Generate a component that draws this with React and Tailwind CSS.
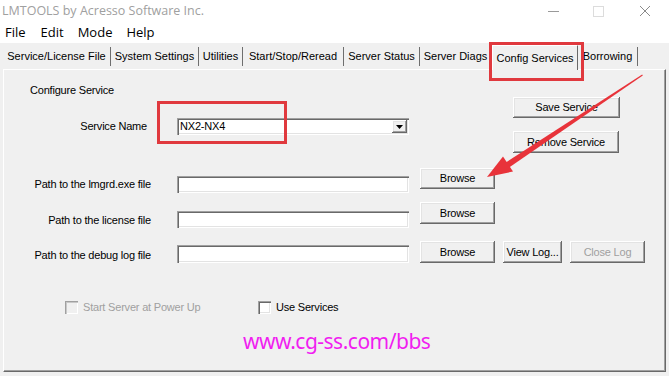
import React from 'react';

const raised =
  'bg-[#f0f0f0] shadow-[inset_-1px_-1px_0_#696969,inset_1px_1px_0_#ffffff,inset_-2px_-2px_0_#a0a0a0,inset_2px_2px_0_#e3e3e3]';
const sunken =
  'bg-white shadow-[inset_1px_1px_0_#a0a0a0,inset_2px_2px_0_#696969,inset_-1px_-1px_0_#ffffff,inset_-2px_-2px_0_#e3e3e3]';

const tabs = [
  { label: 'Service/License File', w: 'w-[108px]' },
  { label: 'System Settings', w: 'w-[88px]' },
  { label: 'Utilities', w: 'w-[44px]' },
  { label: 'Start/Stop/Reread', w: 'w-[101px]' },
  { label: 'Server Status', w: 'w-[76px]' },
  { label: 'Server Diags', w: 'w-[72px]' },
  { label: 'Config Services', w: 'w-[86px]', active: true },
  { label: 'Borrowing', w: 'w-[60px]' },
];

const Btn = ({ children, className = '', disabled }) => (
  <div
    className={`${raised} flex items-center justify-center shrink-0 ${
      disabled ? 'text-[#a0a0a0]' : 'text-black'
    } ${className}`}
  >
    {children}
  </div>
);

const Check = ({ label, disabled, className = '' }) => (
  <div className={`flex items-center ${className}`}>
    <div
      className={`w-[13px] h-[13px] shrink-0 ${
        disabled
          ? 'bg-[#f0f0f0] shadow-[inset_1px_1px_0_#a0a0a0,inset_2px_2px_0_#c8c8c8,inset_-1px_-1px_0_#ffffff]'
          : sunken
      }`}
    />
    <span className={`ml-[5px] ${disabled ? 'text-[#a0a0a0]' : 'text-black'}`}>{label}</span>
  </div>
);

export default function App() {
  return (
    <div
      className="relative w-[669px] h-[376px] overflow-hidden bg-[#f0f0f0] flex flex-col"
      style={{ fontFamily: '"Liberation Sans", Arial, sans-serif' }}
    >
      {/* Title bar */}
      <div className="h-[22px] bg-white flex items-center justify-between shrink-0">
        <span
          className="pl-[2px] text-[12.5px] text-[#a0a0a0] leading-none"
          style={{ fontFamily: '"Open Sans", sans-serif' }}
        >
          LMTOOLS by Acresso Software Inc.
        </span>
        <div className="flex items-center h-full">
          <svg width="46" height="22" viewBox="0 0 46 22">
            <line x1="17" y1="11.5" x2="28" y2="11.5" stroke="#9a9a9a" strokeWidth="1" />
          </svg>
          <svg width="46" height="22" viewBox="0 0 46 22">
            <rect x="16.5" y="6.5" width="10" height="10" fill="none" stroke="#dcdcdc" strokeWidth="1" />
          </svg>
          <svg width="46" height="22" viewBox="0 0 46 22">
            <path d="M17 6 L27 16 M27 6 L17 16" stroke="#8a8a8a" strokeWidth="1" />
          </svg>
        </div>
      </div>

      {/* Menu bar */}
      <div
        className="h-[21px] bg-white flex items-center shrink-0 text-[13px] text-black"
        style={{ fontFamily: '"Open Sans", sans-serif' }}
      >
        <span className="ml-[5px]">File</span>
        <span className="ml-[15px]">Edit</span>
        <span className="ml-[14px]">Mode</span>
        <span className="ml-[14px]">Help</span>
      </div>

      {/* Tabs */}
      <div className="h-[26px] flex items-end pl-[3px] shrink-0 text-[11px] leading-none">
        {tabs.map((t) =>
          t.active ? (
            <div
              key={t.label}
              className={`${t.w} h-[25px] -mb-[1px] flex items-start justify-center pt-[7px] border-r border-[#696969] border-t border-l border-t-white border-l-white relative z-10 bg-[#f0f0f0]`}
            >
              {t.label}
            </div>
          ) : (
            <div
              key={t.label}
              className={`${t.w} h-[19px] mb-[3px] flex items-center justify-center border-r border-[#6e6e6e]`}
            >
              {t.label}
            </div>
          )
        )}
      </div>

      {/* Panel */}
      <div className="mx-[3px] h-[303px] border-l border-t border-white border-r border-b border-r-[#696969] border-b-[#696969] shadow-[inset_-1px_-1px_0_#a0a0a0] flex flex-col text-[11px] leading-[13px] tracking-[-0.2px] text-black">
        {/* top section */}
        <div className="flex">
          <div className="w-[405px]">
            <div className="pl-[26px] pt-[14px]">Configure Service</div>
            <div className="flex items-center h-[17px] mt-[21px]">
              <div className="w-[143px] text-right">Service Name</div>
              <div className={`${sunken} ml-[30px] w-[232px] h-[17px] flex items-center justify-between pl-[3px] pr-[2px]`}>
                <span>NX2-NX4</span>
                <div className={`${raised} w-[15px] h-[13px] flex items-center justify-center`}>
                  <svg width="7" height="4" viewBox="0 0 7 4">
                    <path d="M0 0 H7 L3.5 4 Z" fill="#000" />
                  </svg>
                </div>
              </div>
            </div>
          </div>
          <div className="ml-[104px] mt-[27px] flex flex-col">
            <Btn className="w-[107px] h-[21px]">Save Service</Btn>
            <Btn className="w-[106px] h-[22px] mt-[13px]">Remove Service</Btn>
          </div>
        </div>

        {/* path rows */}
        <div className="flex items-start mt-[15px]">
          <div className="w-[147px] text-right mt-[10px]">Path to the lmgrd.exe file</div>
          <div className={`${sunken} ml-[26px] mt-[8px] w-[232px] h-[17px]`} />
          <Btn className="ml-[11px] w-[75px] h-[21px]">Browse</Btn>
        </div>
        <div className="flex items-start mt-[9px]">
          <div className="w-[147px] text-right mt-[12px]">Path to the license file</div>
          <div className={`${sunken} ml-[26px] mt-[9px] w-[232px] h-[17px]`} />
          <Btn className="ml-[11px] w-[75px] h-[22px]">Browse</Btn>
        </div>
        <div className="flex items-start mt-[13px]">
          <div className="w-[147px] text-right mt-[8px]">Path to the debug log file</div>
          <div className={`${sunken} ml-[26px] mt-[4px] w-[232px] h-[18px]`} />
          <Btn className="ml-[11px] w-[75px] h-[22px]">Browse</Btn>
          <Btn className="ml-[8px] w-[59px] h-[22px]">View Log...</Btn>
          <Btn className="ml-[8px] w-[75px] h-[22px]" disabled>
            Close Log
          </Btn>
        </div>

        {/* checkboxes */}
        <div className="flex items-center mt-[38px] h-[13px]">
          <Check className="ml-[61px] w-[193px]" label="Start Server at Power Up" disabled />
          <Check label="Use Services" />
        </div>

        {/* watermark */}
        <div
          className="pl-[239px] mt-[14px] text-[21px] leading-[26px] tracking-[-0.5px] text-[#f01ef0]"
          style={{ fontFamily: '"Noto Sans", sans-serif' }}
        >
          www.cg-ss.com/bbs
        </div>
      </div>

      {/* annotations */}
      <div className="absolute left-[489px] top-[42px] w-[95px] h-[39px] border-[3px] border-[#e0393e] z-20" />
      <div className="absolute left-[157px] top-[101px] w-[130px] h-[43px] border-[3px] border-[#e0393e] z-20" />
      <svg className="absolute left-0 top-0 z-30" width="669" height="376" viewBox="0 0 669 376">
        <polygon points="507.7,168.5 504.3,163.5 642.2,74.6 642.8,75.4" fill="#e8333a" />
        <polygon points="487,177 503,156.5 513,171.5" fill="#e8333a" />
      </svg>
    </div>
  );
}
